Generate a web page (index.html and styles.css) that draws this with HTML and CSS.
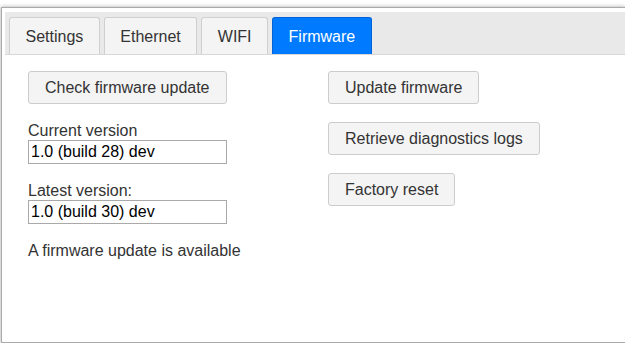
FILE: index.html
```html
<!DOCTYPE html>
<html lang="en">
<head>
    <meta charset="UTF-8">
    <title>Firmware</title>
    <link rel="stylesheet" href="styles.css">
</head>
<body>
    <div class="panel">
        <!-- tabs -->
        <div class="tabs">
            <div class="tab">Settings</div>
            <div class="tab">Ethernet</div>
            <div class="tab">WIFI</div>
            <div class="tab active">Firmware</div>
        </div>

        <div class="content">
            <div class="column">
                <button class="btn">Check firmware update</button>
                <label class="field">
                    <span class="field-label">Current version</span>
                    <input class="field-input" type="text" value="1.0 (build 28) dev" readonly>
                </label>
                <label class="field">
                    <span class="field-label">Latest version:</span>
                    <input class="field-input" type="text" value="1.0 (build 30) dev" readonly>
                </label>
                <p class="status">A firmware update is available</p>
            </div>
            <div class="column">
                <button class="btn">Update firmware</button>
                <button class="btn">Retrieve diagnostics logs</button>
                <button class="btn">Factory reset</button>
            </div>
        </div>
    </div>
</body>
</html>
```

FILE: styles.css
```css
/* page */
body {
    margin: 0;
    overflow: hidden;
    background: #fff;
    font-family: 'Liberation Sans', Arial, sans-serif;
    font-size: 16px;
    color: #333;
}

/* outer panel with shadow (right edge runs off the window) */
.panel {
    margin: 7px 0 0 1px;
    height: 330px;
    padding: 4px 0 0 3px;
    border: 1px solid #aaa;
    border-right: none;
    box-shadow: 0 0 4px rgba(0, 0, 0, 0.35);
    background: #fff;
}

/* tab bar */
.tabs {
    display: flex;
    gap: 4px;
    padding: 5px 4px 0 4px;
    background: #e9e9e9;
    border-bottom: 1px solid #d8d8d8;
}

.tab {
    height: 36px;
    line-height: 37px;
    padding: 0 15.5px;
    background: #f4f4f4;
    border: 1px solid #cfcfcf;
    border-bottom: none;
    border-radius: 3px 3px 0 0;
    color: #333;
}

.tab.active {
    background: #007bff;
    border-color: #0062d6;
    color: #fff;
}

/* content */
.content {
    display: grid;
    grid-template-columns: 300px auto;
    padding: 16px 0 0 23px;
}

.column {
    display: flex;
    flex-direction: column;
    align-items: flex-start;
    gap: 18px;
}

.btn {
    height: 33px;
    padding: 0 16px;
    font-family: inherit;
    font-size: 16px;
    color: #333;
    background: #f4f4f4;
    border: 1px solid #ccc;
    border-radius: 3px;
}

.field {
    display: flex;
    flex-direction: column;
}

.field-label {
    line-height: 18px;
}

.field-input {
    width: 199px;
    height: 24px;
    box-sizing: border-box;
    margin: 0;
    padding: 0 2px;
    font-family: inherit;
    font-size: 16px;
    color: #000;
    border: 1px solid #a9a9a9;
    outline: none;
}

.status {
    margin: 0;
    line-height: 18px;
}
```
